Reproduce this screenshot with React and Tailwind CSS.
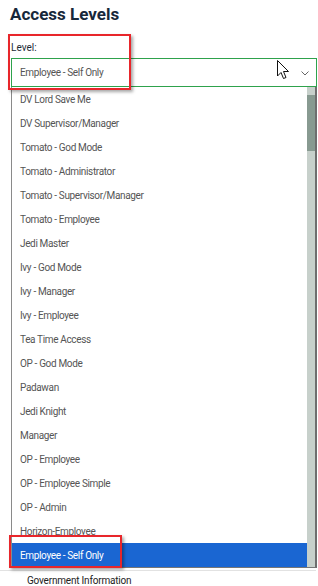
import React from 'react';

const levels = [
  'DV Lord Save Me',
  'DV Supervisor/Manager',
  'Tomato - God Mode',
  'Tomato - Administrator',
  'Tomato - Supervisor/Manager',
  'Tomato - Employee',
  'Jedi Master',
  'Ivy - God Mode',
  'Ivy - Manager',
  'Ivy - Employee',
  'Tea Time Access',
  'OP - God Mode',
  'Padawan',
  'Jedi Knight',
  'Manager',
  'OP - Employee',
  'OP - Employee Simple',
  'OP - Admin',
  'Horizon-Employee',
  'Employee - Self Only',
];

const selected = 'Employee - Self Only';

const App = () => {
  return (
    <div className="relative w-[318px] h-[586px] overflow-hidden bg-white font-['Roboto',sans-serif]">
      <h1 className="pl-[10px] pt-[3px] text-[17px] leading-[22px] font-bold text-[#17283a]">Access Levels</h1>

      <div className="mt-[16px] ml-[11px] w-[306px]">
        <label className="block text-[10px] leading-[13px] text-[#1d2b36] mb-[4px]">Level:</label>

        {/* select box */}
        <div className="h-[29px] border border-[#2ea24c] flex items-center pl-[8px] pr-[7px]">
          <span className="flex-1 text-[10px] tracking-[-0.35px] text-[#555]">{selected}</span>
          <svg width="8" height="5" viewBox="0 0 8 5" className="mt-[1px]">
            <path d="M0.5 0.5 L4 4 L7.5 0.5" fill="none" stroke="#666" strokeWidth="1" />
          </svg>
        </div>

        {/* open option list */}
        <div className="flex border-l border-l-[#8a8a8a] border-r-2 border-r-[#6e6e6e] border-b border-b-[#777]">
          <ul className="flex-1">
            {levels.map((lvl) => (
              <li
                key={lvl}
                className={
                  lvl === selected
                    ? 'h-[24px] flex items-center pl-[8px] text-[10px] tracking-[-0.35px] bg-[#1a66d2] text-white'
                    : 'h-[24px] flex items-center pl-[8px] text-[10px] tracking-[-0.35px] text-[#555]'
                }
              >
                {lvl}
              </li>
            ))}
          </ul>
          <div className="w-[8px] flex flex-col bg-[#c7d0cb]">
            <div className="h-[8px]" />
            <div className="h-[56px] bg-[#889a91]" />
          </div>
        </div>
      </div>

      <div className="mt-[2px] w-[316px] border-t border-[#e2e2e2] pt-[3px] pl-[27px] text-[10px] leading-[14px] tracking-[-0.2px] text-[#222]">
        Government Information
      </div>

      {/* mouse cursor */}
      <svg width="14" height="21" viewBox="0 0 14 21" className="absolute left-[277px] top-[60px]">
        <path d="M0.5 0.5 L0.5 16 L4 12.5 L6.5 18.5 L9 17.5 L6.5 11.5 L11.5 11.5 Z" fill="white" stroke="#111" strokeWidth="1" />
      </svg>

      {/* annotation boxes */}
      <div className="absolute left-[8px] top-[34px] w-[123px] h-[56px] border-2 border-[#e8262b] shadow-[2px_2px_3px_rgba(0,0,0,0.35)]" />
      <div className="absolute left-[9px] top-[535px] w-[113px] h-[33px] border-2 border-[#e8262b] shadow-[2px_2px_3px_rgba(0,0,0,0.35)]" />
    </div>
  );
};

export default App;
